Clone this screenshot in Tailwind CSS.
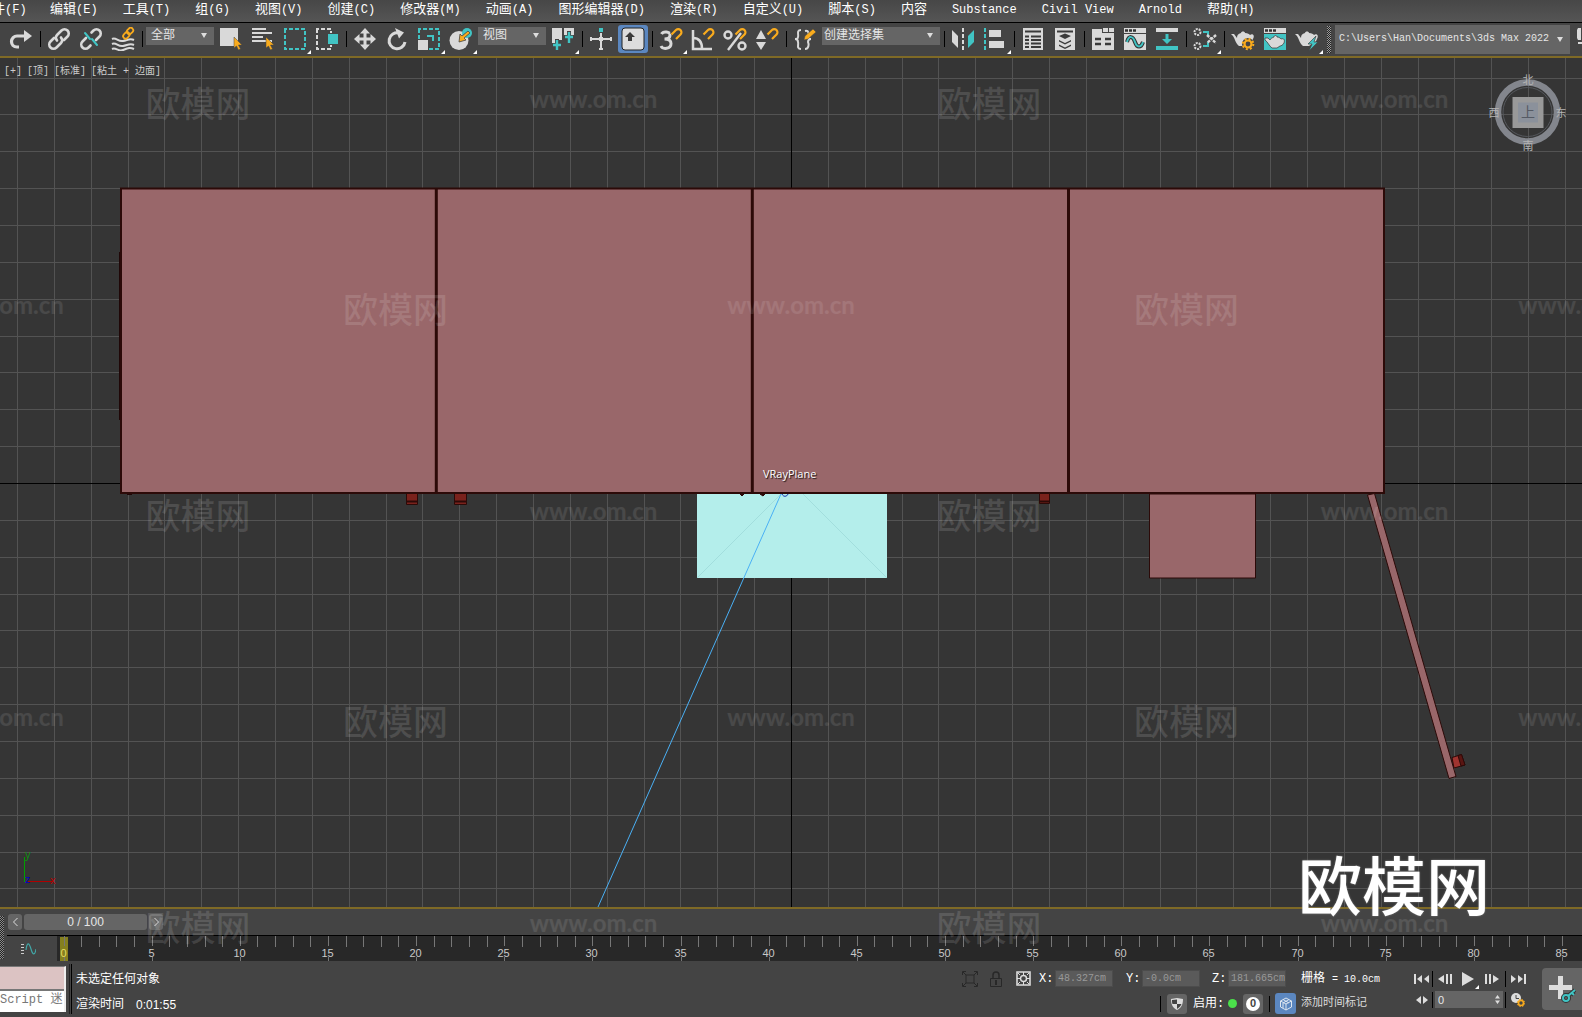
<!DOCTYPE html>
<html lang="zh-CN">
<head>
    <meta charset="UTF-8">
    <meta name="viewport" content="width=device-width, initial-scale=1.0">
    <title>3ds Max 2022</title>
    <script src="https://cdn.jsdelivr.net/npm/@tailwindcss/browser@4"></script>
</head>
<body class="relative flex h-screen flex-col overflow-hidden bg-[#444] font-['Liberation_Mono','Noto_Sans_CJK_SC',monospace] text-xs text-[#e6e6e6]">

    <!-- Menu bar -->
    <nav class="flex h-[23px] shrink-0 items-center gap-[25px] overflow-hidden border-b border-black bg-linear-to-b from-[#474747] to-[#555] pb-[2px] text-[13px] whitespace-nowrap text-white">
        <button class="-ml-[8px] w-[33px] shrink-0 text-right">件<span class="text-xs">(F)</span></button>
        <button>编辑<span class="text-xs">(E)</span></button>
        <button>工具<span class="text-xs">(T)</span></button>
        <button>组<span class="text-xs">(G)</span></button>
        <button>视图<span class="text-xs">(V)</span></button>
        <button>创建<span class="text-xs">(C)</span></button>
        <button>修改器<span class="text-xs">(M)</span></button>
        <button>动画<span class="text-xs">(A)</span></button>
        <button>图形编辑器<span class="text-xs">(D)</span></button>
        <button>渲染<span class="text-xs">(R)</span></button>
        <button>自定义<span class="text-xs">(U)</span></button>
        <button>脚本<span class="text-xs">(S)</span></button>
        <button>内容</button>
        <button class="text-xs">Substance</button>
        <button class="text-xs">Civil View</button>
        <button class="text-xs">Arnold</button>
        <button>帮助<span class="text-xs">(H)</span></button>
    </nav>

    <!-- Main toolbar -->
    <div class="flex h-[33px] shrink-0 items-center overflow-hidden bg-[#444] pb-px pl-[5px]">
        <button aria-label="重做" class="flex w-8 shrink-0 justify-center"><svg class="size-6" viewBox="0 0 24 24"><path d="M10 20H8C4.500 20 2.500 17.500 2.500 14.500S5 9 8 9h9" fill="none" stroke="#d9d9d9" stroke-width="3.200"/><path d="M15 3l8 6-8 6z" fill="#d9d9d9"/></svg></button>
        <span class="flex w-[6px] shrink-0 justify-center"><i class="h-4 w-px bg-black"></i></span>
        <button aria-label="链接" class="flex w-8 shrink-0 justify-center"><svg class="size-6" viewBox="0 0 24 24" fill="none" stroke="#d9d9d9" stroke-width="2.600" stroke-linecap="round"><path d="M10 13.500a4 4 0 0 1 0-5.500l4.500-4.500a4 4 0 0 1 6 6L17 13M14 10.500a4 4 0 0 1 0 5.500l-4.500 4.500a4 4 0 0 1-6-6L7 11"/></svg></button>
        <button aria-label="取消链接" class="flex w-8 shrink-0 justify-center"><svg class="size-6" viewBox="0 0 24 24" fill="none" stroke="#d9d9d9" stroke-width="2.600" stroke-linecap="round"><path d="M12.500 5.500l2-2a4 4 0 0 1 6 6L17 13M11.500 18.500l-2 2a4 4 0 0 1-6-6L7 11"/><path d="M6 6l5 6M13 12l5 6" stroke="#41c4c4" stroke-width="2"/></svg></button>
        <button aria-label="绑定到空间扭曲" class="flex w-8 shrink-0 justify-center"><svg class="size-6" viewBox="0 0 24 24" fill="none" stroke="#d9d9d9" stroke-width="2"><path d="M1 12c4-2 6 3 11 2s7-3 11-1M1 17c4-2 6 3 11 2s7-3 11-1M1 22c4-2 6 3 11 1s7-3 11-1"/><g stroke="#f9ab1d" stroke-width="1.800"><rect x="15.500" y="1.500" width="7" height="5" rx="2.500" transform="rotate(-45 19 4)"/><rect x="11.500" y="6" width="7" height="5" rx="2.500" transform="rotate(-45 15 8)"/></g></svg></button>
        <span class="flex w-[6px] shrink-0 justify-center"><i class="h-4 w-px bg-black"></i></span>
        <span class="relative mx-px mb-[6px] shrink-0">
            <select aria-label="选择过滤器" class="block h-[18px] w-[68px] appearance-none bg-[#656565] pl-[5px] text-xs leading-[18px]"><option>全部</option></select>
            <svg class="pointer-events-none absolute top-[6px] right-[7px] h-[5px] w-[6px]" viewBox="0 0 6 5"><path d="M0 0h6L3 5z" fill="#ddd"/></svg>
        </span>
        <button aria-label="选择对象" class="flex w-8 shrink-0 justify-center"><svg class="size-6" viewBox="0 0 24 24"><path d="M1 1h18v18H1z" fill="#d9d9d9"/><path d="M15 10v11l2.500-2 2 4 2-1-2-4h3.500z" fill="#f9ab1d" stroke="#444" stroke-width=".5"/></svg></button>
        <button aria-label="按名称选择" class="flex w-8 shrink-0 justify-center"><svg class="size-6" viewBox="0 0 24 24"><path d="M1 1h14v2H1zM1 5h20v2H1zM1 9h11v2H1zM1 13h20v2H1z" fill="#d9d9d9"/><path d="M15 10v11l2.500-2 2 4 2-1-2-4h3.500z" fill="#f9ab1d" stroke="#444" stroke-width=".5"/></svg></button>
        <button aria-label="矩形选择区域" class="relative flex w-8 shrink-0 justify-center"><svg class="size-6" viewBox="0 0 24 24"><path d="M2 2h20v20H2z" fill="none" stroke="#41c4c4" stroke-width="2" stroke-dasharray="4 2" stroke-dashoffset="2"/></svg><svg class="absolute right-0 -bottom-[3px] size-1" viewBox="0 0 4 4"><path d="M4 0v4H0z" fill="#fff"/></svg></button>
        <button aria-label="窗口/交叉" class="flex w-8 shrink-0 justify-center"><svg class="size-6" viewBox="0 0 24 24"><path d="M2 2h14v20H2z" fill="none" stroke="#d9d9d9" stroke-width="2" stroke-dasharray="4 2" stroke-dashoffset="2"/><path d="M12 6h12v12H12z" fill="#444"/><path d="M13 7h10v10H13z" fill="#41c4c4"/></svg></button>
        <span class="flex w-[6px] shrink-0 justify-center"><i class="h-4 w-px bg-black"></i></span>
        <button aria-label="移动" class="flex w-8 shrink-0 justify-center"><svg class="size-6" viewBox="0 0 24 24"><path d="M12 1l5 5.500h-3.500v4h4V7l5.500 5-5.500 5v-3.500h-4v4H17L12 23l-5-5.500h3.500v-4h-4V17L1 12l5.500-5v3.500h4v-4H7z" fill="#d9d9d9"/></svg></button>
        <button aria-label="旋转" class="flex w-8 shrink-0 justify-center"><svg class="size-6" viewBox="0 0 24 24"><path d="M14 6a8 8 0 1 0 6 9" fill="none" stroke="#d9d9d9" stroke-width="3"/><path d="M10 1l9 4.500-5 6z" fill="#d9d9d9"/></svg></button>
        <button aria-label="缩放" class="relative flex w-8 shrink-0 justify-center"><svg class="size-6" viewBox="0 0 24 24"><path d="M2 2h20v20H2z" fill="none" stroke="#41c4c4" stroke-width="2" stroke-dasharray="4 2" stroke-dashoffset="2"/><path d="M0 12h12v12H0z" fill="#444"/><path d="M1 13h10v10H1z" fill="#d9d9d9"/><path d="M10 9h6v5" fill="none" stroke="#41c4c4" stroke-width="2"/></svg><svg class="absolute right-0 -bottom-[3px] size-1" viewBox="0 0 4 4"><path d="M4 0v4H0z" fill="#fff"/></svg></button>
        <button aria-label="放置" class="relative flex w-8 shrink-0 justify-center"><svg class="size-6" viewBox="0 0 24 24"><circle cx="10" cy="13.500" r="9.500" fill="#d9d9d9"/><circle cx="18" cy="6" r="5" fill="#41c4c4"/><path d="M19 4l-6 5-2-2-1 8 7-2-2-2 6-5z" fill="#f9ab1d" stroke="#444" stroke-width=".8"/></svg><svg class="absolute right-0 -bottom-[3px] size-1" viewBox="0 0 4 4"><path d="M4 0v4H0z" fill="#fff"/></svg></button>
        <span class="relative mx-px mb-[6px] shrink-0">
            <select aria-label="参考坐标系" class="block h-[18px] w-[68px] appearance-none bg-[#656565] pl-[5px] text-xs leading-[18px]"><option>视图</option></select>
            <svg class="pointer-events-none absolute top-[6px] right-[7px] h-[5px] w-[6px]" viewBox="0 0 6 5"><path d="M0 0h6L3 5z" fill="#ddd"/></svg>
        </span>
        <button aria-label="使用轴点中心" class="relative flex w-8 shrink-0 justify-center"><svg class="size-6" viewBox="0 0 24 24"><path d="M1 1h10v12H6v6H1zM13 1h10v10H13z" fill="#d9d9d9"/><path d="M6 12v11M1 18h10M18 4v12M13 10h10" stroke="#444" stroke-width="4"/><path d="M6 13v10M2 18h8M18 5v11M14 10h8" stroke="#41c4c4" stroke-width="2.400"/></svg><svg class="absolute right-0 -bottom-[3px] size-1" viewBox="0 0 4 4"><path d="M4 0v4H0z" fill="#fff"/></svg></button>
        <span class="flex w-[6px] shrink-0 justify-center"><i class="h-4 w-px bg-black"></i></span>
        <button aria-label="选择并操纵" class="flex w-8 shrink-0 justify-center"><svg class="size-6" viewBox="0 0 24 24"><path d="M12 6v17M2 12h20" stroke="#d9d9d9" stroke-width="2"/><path d="M10 1h4v4h-4z" fill="#41c4c4"/><path d="M1 10h2v4H1zM21 10h2v4h-2zM10 21h4v2h-4zM10 10h4v4h-4z" fill="#d9d9d9"/></svg></button>
        <button aria-label="键盘快捷键覆盖切换" aria-pressed="true" class="mx-px flex h-7 w-[30px] shrink-0 items-center justify-center rounded-[3px] bg-[#5b87c0]"><svg class="size-6" viewBox="0 0 24 24"><rect x="1" y="1" width="22" height="22" rx="3" fill="#dcdcdc" stroke="#222"/><path d="M9 5l5 5h-3v4H7v-4H4z" fill="#3a3a3a"/></svg></button>
        <span class="flex w-[6px] shrink-0 justify-center"><i class="h-4 w-px bg-black"></i></span>
        <button aria-label="捕捉开关" class="relative flex w-8 shrink-0 justify-center"><svg class="size-6" viewBox="0 0 24 24" fill="none"><path d="M2.500 7c1.500-3 9-3 8.500 1.500-.3 3-3 3.500-5.500 3.500 3.500 0 6.500 1 6.500 4.500 0 6-8.500 6-10 2.500" stroke="#d9d9d9" stroke-width="3"/><path d="M12.500 7.500l4.500-4.500a3 3 0 0 1 4.500 4.500L17 12" stroke="#444" stroke-width="4.500"/><path d="M12.500 7.500l4.500-4.500a3 3 0 0 1 4.500 4.500L17 12" stroke="#f9ab1d" stroke-width="2.200"/></svg><svg class="absolute right-0 -bottom-[3px] size-1" viewBox="0 0 4 4"><path d="M4 0v4H0z" fill="#fff"/></svg></button>
        <button aria-label="角度捕捉" class="flex w-8 shrink-0 justify-center"><svg class="size-6" viewBox="0 0 24 24" fill="none"><path d="M2 3v19h19" stroke="#d9d9d9" stroke-width="2.500"/><path d="M2 11c6 0 9 4 9 11" stroke="#d9d9d9" stroke-width="2.500"/><path d="M12.500 7.500l4.500-4.500a3 3 0 0 1 4.500 4.500L17 12" stroke="#f9ab1d" stroke-width="2.200"/></svg></button>
        <button aria-label="百分比捕捉" class="flex w-8 shrink-0 justify-center"><svg class="size-6" viewBox="0 0 24 24" fill="none"><circle cx="5" cy="8" r="3.500" stroke="#d9d9d9" stroke-width="2.400"/><circle cx="19" cy="19" r="3.500" stroke="#d9d9d9" stroke-width="2.400"/><path d="M18 6L5 23" stroke="#d9d9d9" stroke-width="2.400"/><path d="M12.500 7.500l4.500-4.500a3 3 0 0 1 4.500 4.500L17 12" stroke="#f9ab1d" stroke-width="2.200"/></svg></button>
        <button aria-label="微调器捕捉" class="flex w-8 shrink-0 justify-center"><svg class="size-6" viewBox="0 0 24 24"><path d="M1 12l5-9 5 9zM1 15h10l-5 8z" fill="#d9d9d9"/><path d="M12.500 7.500l4.500-4.500a3 3 0 0 1 4.500 4.500L17 12" fill="none" stroke="#f9ab1d" stroke-width="2.200"/></svg></button>
        <span class="flex w-[6px] shrink-0 justify-center"><i class="h-4 w-px bg-black"></i></span>
        <button aria-label="管理选择集" class="flex w-8 shrink-0 justify-center"><svg class="size-6" viewBox="0 0 24 24"><path d="M8 3C3 3 6 8 5 10c0 2-1 2-3 2 2 0 3 1 3 3 1 2-2 7 3 7M12 4c4-1 4 3 3 6 0 1 1 2 3 2-2 0-3 1-3 3 1 2 1 7-3 7" fill="none" stroke="#d9d9d9" stroke-width="2"/><path d="M11 13l1-4 8-7 3 3-8 7z" fill="#f9ab1d" stroke="#444" stroke-width=".5"/></svg></button>
        <span class="relative mx-px mb-[6px] shrink-0">
            <select aria-label="命名选择集" class="block h-[18px] w-[118px] appearance-none bg-[#656565] pl-[2px] text-xs leading-[18px]"><option>创建选择集</option></select>
            <svg class="pointer-events-none absolute top-[6px] right-[7px] h-[5px] w-[6px]" viewBox="0 0 6 5"><path d="M0 0h6L3 5z" fill="#ddd"/></svg>
        </span>
        <span class="flex w-[6px] shrink-0 justify-center"><i class="h-4 w-px bg-black"></i></span>
        <button aria-label="镜像" class="flex w-8 shrink-0 justify-center"><svg class="size-6" viewBox="0 0 24 24"><path d="M1 3l6 6v12l-6-6z" fill="#d9d9d9"/><path d="M23 3l-6 6v12l6-6z" fill="#41c4c4"/><path d="M12 1v22" stroke="#d9d9d9" stroke-width="2" stroke-dasharray="4 2"/></svg></button>
        <button aria-label="对齐" class="relative flex w-8 shrink-0 justify-center"><svg class="size-6" viewBox="0 0 24 24"><path d="M2 1v22" stroke="#41c4c4" stroke-width="2" stroke-dasharray="4 2"/><path d="M6 3h12v7H6zM6 14h15v7H6z" fill="#d9d9d9"/></svg><svg class="absolute right-0 -bottom-[3px] size-1" viewBox="0 0 4 4"><path d="M4 0v4H0z" fill="#fff"/></svg></button>
        <span class="flex w-[6px] shrink-0 justify-center"><i class="h-4 w-px bg-black"></i></span>
        <button aria-label="场景资源管理器" class="flex w-8 shrink-0 justify-center"><svg class="size-6" viewBox="0 0 24 24"><path d="M2 1h20v22H2z" fill="#d9d9d9"/><path d="M4 4.500h16M4 9.500h4M10 9.500h10M4 13h4M10 13h10M4 16.500h4M10 16.500h10M4 20h4M10 20h10" stroke="#3a3a3a" stroke-width="2"/></svg></button>
        <button aria-label="层资源管理器" class="flex w-8 shrink-0 justify-center"><svg class="size-6" viewBox="0 0 24 24"><path d="M2 1h20v22H2z" fill="#d9d9d9"/><path d="M4 4.500h16" stroke="#3a3a3a" stroke-width="2"/><path d="M12 6.500l6 2.500-6 3-6-3zM6 13l6 3 6-3v1.500l-6 3-6-3zM6 17.500l6 3 6-3V19l-6 3-6-3z" fill="#3a3a3a"/></svg></button>
        <span class="flex w-[6px] shrink-0 justify-center"><i class="h-4 w-px bg-black"></i></span>
        <button aria-label="功能区" class="flex w-8 shrink-0 justify-center"><svg class="size-6" viewBox="0 0 24 24"><path d="M1 2h10v4h12v17H1zM12 1h5v4h-5zM18 1h5v4h-5z" fill="#d9d9d9"/><path d="M4 12h6M14 12h6M4 17h6M14 17h6" stroke="#3a3a3a" stroke-width="2.500"/></svg></button>
        <button aria-label="曲线编辑器" class="flex w-8 shrink-0 justify-center"><svg class="size-6" viewBox="0 0 24 24"><path d="M1 1h22v22H1z" fill="#d9d9d9"/><path d="M2 3.500h11" stroke="#333" stroke-width="2.500" stroke-dasharray="3 1"/><path d="M1 6.500h22" stroke="#444"/><path d="M4 15c2-7 6-6 8 0s6 6 8 0" fill="none" stroke="#333" stroke-width="4"/><path d="M4 15c2-7 6-6 8 0s6 6 8 0" fill="none" stroke="#41c4c4" stroke-width="2"/></svg></button>
        <button aria-label="图解视图" class="flex w-8 shrink-0 justify-center"><svg class="size-6" viewBox="0 0 24 24"><path d="M1 1h22v4H1z" fill="#d9d9d9"/><path d="M1 19h22v4H1zM10.500 7h3v5H17l-5 5-5-5h3.500z" fill="#41c4c4"/></svg></button>
        <span class="flex w-[6px] shrink-0 justify-center"><i class="h-4 w-px bg-black"></i></span>
        <button aria-label="材质编辑器" class="relative flex w-8 shrink-0 justify-center"><svg class="size-6" viewBox="0 0 24 24" fill="none"><circle cx="4.500" cy="5" r="3" stroke="#d9d9d9" stroke-width="2" stroke-dasharray="2 1"/><circle cx="4.500" cy="19" r="3" stroke="#d9d9d9" stroke-width="2" stroke-dasharray="2 1"/><path d="M10 5h5v4M10 19h5v-4" stroke="#41c4c4" stroke-width="2"/><path d="M14 8l9 8M23 8l-9 8" stroke="#d9d9d9" stroke-width="2.400" stroke-dasharray="3 1"/></svg><svg class="absolute right-0 -bottom-[3px] size-1" viewBox="0 0 4 4"><path d="M4 0v4H0z" fill="#fff"/></svg></button>
        <span class="flex w-[6px] shrink-0 justify-center"><i class="h-4 w-px bg-black"></i></span>
        <button aria-label="渲染设置" class="flex w-8 shrink-0 justify-center"><svg class="size-6" viewBox="0 0 24 24"><path d="M0 7h3l3 4c0-3 1-4 4-5 0-2 4-2 4 0 3 0 4 1 5 2 3-2 5 1 3 4-1 3-3 4-5 5l-3 2H8C5 17 4 12 2 9z" fill="#d9d9d9"/><circle cx="17" cy="17" r="6" fill="#444"/><circle cx="17" cy="17" r="3.500" fill="none" stroke="#f9ab1d" stroke-width="2.200"/><circle cx="17" cy="17" r="5.300" fill="none" stroke="#f9ab1d" stroke-width="2" stroke-dasharray="2 2.160"/></svg></button>
        <button aria-label="渲染帧窗口" class="flex w-8 shrink-0 justify-center"><svg class="size-6" viewBox="0 0 24 24"><path d="M1 1h22v5H1z" fill="#d9d9d9"/><path d="M2 3.500h11" stroke="#333" stroke-width="2.500" stroke-dasharray="3 1"/><path d="M1 7h22v16H1z" fill="#41c4c4"/><path d="M2 11h3l2 2c1-2 2-2 4-3 0-2 3-2 3 0 2 0 3 1 4 2 3-1 4 1 3 4-1 2-3 3-4 3l-3 2H9c-3-2-4-6-7-8z" fill="#d9d9d9" stroke="#333" stroke-width=".7"/></svg></button>
        <button aria-label="渲染产品" class="relative flex w-8 shrink-0 justify-center"><svg class="size-6" viewBox="0 0 24 24"><path d="M0 7h3l3 4c0-3 1-4 4-5 0-2 4-2 4 0 3 0 4 1 5 2 3-2 5 1 3 4-1 3-3 4-5 5l-3 2H8C5 17 4 12 2 9z" fill="#d9d9d9"/><path d="M21 9l-8 8h4l-3 7 9-9h-4z" fill="#41c4c4" stroke="#444" stroke-width=".7"/></svg><svg class="absolute right-0 -bottom-[3px] size-1" viewBox="0 0 4 4"><path d="M4 0v4H0z" fill="#fff"/></svg></button>
        <i class="mx-1 h-[27px] w-1 shrink-0 bg-[repeating-conic-gradient(#222_0_25%,#999_0_50%)] bg-[length:2px_2px]"></i>
        <span class="relative grow">
            <select aria-label="项目文件夹" class="block h-[29px] w-full appearance-none bg-[#656565] pl-[4px] text-[10px]"><option>C:\Users\Han\Documents\3ds Max 2022</option></select>
            <svg class="pointer-events-none absolute top-3 right-[7px] h-[5px] w-[6px]" viewBox="0 0 6 5"><path d="M0 0h6L3 5z" fill="#ddd"/></svg>
        </span>
        <button aria-label="更多" class="ml-[7px] flex w-[5px] shrink-0 overflow-hidden"><svg class="mb-1 h-[18px] w-[5px]" viewBox="0 0 5 18"><path d="M0 2l1-2h3v12H1l-1-2zM1 14h4v2H1z" fill="#d9d9d9"/></svg></button>
    </div>

    <!-- Viewport -->
    <main class="relative min-h-0 grow overflow-hidden border-y-2 border-[#7f6a26] bg-[#353535]">
        <svg class="absolute inset-0 size-full" viewBox="0 58 1582 849" preserveAspectRatio="xMidYMid slice">
            <g id="grid" shape-rendering="crispEdges"></g>
            <path d="M791.500 58v849M0 483.500h1582" stroke="#000"/>

            <!-- Handles on the front edge -->
            <g fill="#7a221c" stroke="#2c0a08">
                <path d="M406.500 493.500h11v11h-11zM454.500 493.500h12v11h-12zM1039.500 493.500h10v10h-10z"/>
                <path d="M406 501.500h12M454 501.500h13M1039 501.500h11" stroke-width="2"/>
            </g>

            <!-- Cabinets -->
            <path d="M119 252h2v168h-2zM127 494h5v1h-5z" fill="#1f0707"/>
            <path d="M121 188.500h1263V493H121z" fill="#99676a" stroke="#2c0a08" stroke-width="2"/>
            <path d="M436.300 188v305M752.300 188v305M1068.500 188v305" stroke="#2c0a08" stroke-width="3"/>
            <path d="M1149.500 494v84h106v-84z" fill="#99676a" stroke="#2c0a08"/>
            <path d="M1367.500 495l7-1.500 81.500 283-7 2z" fill="#99676a" stroke="#2c0a08"/>
            <path d="M1452 757.500l9.500-3 3.500 10.500-11 3z" fill="#a03430" stroke="#2c0a08"/>
            <path d="M1458 755.500l3.500-1 3.500 10.500-4 1z" fill="#5a1512" stroke="#2c0a08"/>

            <!-- VRay plane light -->
            <path d="M697 494h190v84H697z" fill="#b4eeeb"/>
            <path d="M697 578l84-84M803 494l84 84" stroke="#a2dedd"/>
            <path d="M740 494h4l-2 2zM760 494h5l-2 2z" fill="#2c0a08" stroke="#2c0a08"/>
            <path d="M782 494c1 3 5 3 6 0" fill="none" stroke="#1030b0"/>
            <path d="M781 494L598 907" stroke="#4ab0f5"/>
            <text x="763" y="478" fill="#fff" class="font-['Open_Sans',sans-serif] text-[11px] [text-shadow:1px_1px_1px_#111]">VRayPlane</text>

            <!-- Axis tripod -->
            <path d="M24.500 857v25" stroke="#00a000"/>
            <path d="M28 881.500h24" stroke="#b00000"/>
            <g class="font-['Open_Sans',sans-serif] text-[11px]">
                <text x="25" y="858" fill="#109010">y</text>
                <text x="25" y="883" fill="#0000c8">z</text>
                <text x="50" y="884" fill="#c00000">x</text>
            </g>
        </svg>

        <div class="absolute top-[6px] left-1 flex gap-[5px] text-[10px] leading-4 text-[#ccc]">
            <button>[+]</button><button>[顶]</button><button>[标准]</button><button>[粘土 + 边面]</button>
        </div>

        <!-- View cube -->
        <svg class="absolute top-[14px] right-[14px] size-20 text-[11px]" viewBox="0 0 80 80">
            <circle cx="39.500" cy="40" r="29.500" fill="none" stroke="#83868d" stroke-width="6.500"/>
            <circle cx="39.500" cy="40" r="24.500" fill="none" stroke="#55585d"/>
            <path d="M24.500 25h31v31h-31z" fill="#999"/>
            <path d="M30 30.500h20v20H30z" fill="#8b919b"/>
            <g text-anchor="middle">
                <text x="40" y="45" fill="#555a64" class="text-[14px]">上</text>
                <g fill="#b4b4b4"><text x="40" y="12">北</text><text x="40" y="78">南</text><text x="6" y="45">西</text><text x="73" y="45">东</text></g>
            </g>
        </svg>
    </main>

    <!-- Time slider and track bar -->
    <div class="flex h-[52px] shrink-0">
        <i class="mt-[7px] mr-[3px] h-[43px] w-1 shrink-0 bg-[repeating-conic-gradient(#222_0_25%,#888_0_50%)] bg-[length:2px_2px]"></i>
        <div class="flex min-w-0 grow flex-col">
            <div class="flex h-[26px] items-start gap-[2px] pt-[5px] pl-px">
                <button aria-label="上一帧" class="flex h-4 w-[14px] items-center justify-center rounded-[3px] bg-[#656565]"><svg class="h-2 w-[5px]" viewBox="0 0 5 8"><path d="M4.500 0l-4 4 4 4" fill="none" stroke="#ddd"/></svg></button>
                <button class="h-4 w-[123px] rounded-[3px] bg-[#656565] font-['Liberation_Sans',sans-serif] text-xs leading-4">0 / 100</button>
                <button aria-label="下一帧" class="flex h-4 w-[14px] items-center justify-center rounded-[3px] bg-[#656565]"><svg class="h-2 w-[5px]" viewBox="0 0 5 8"><path d="M.5 0l4 4-4 4" fill="none" stroke="#ddd"/></svg></button>
            </div>
            <div class="flex h-[26px] border-t border-black">
                <button aria-label="打开迷你曲线编辑器" class="flex w-[50px] shrink-0 items-center justify-center pr-2"><svg class="h-3 w-[15px]" viewBox="0 0 15 12"><path d="M0 1.500h3M0 4.500h3M0 7.500h3M0 10.500h3" stroke="#ccc"/><path d="M5 7C6-1 8-1 10 6s4 6 5 0" fill="none" stroke="#41a8a8" stroke-width="1.200"/></svg></button>
                <div class="min-w-0 grow overflow-hidden bg-[#282828]">
                    <svg id="track" class="block h-[25px] w-full font-['Liberation_Sans',sans-serif] text-[11px]"></svg>
                </div>
            </div>
        </div>
    </div>

    <!-- Status bar -->
    <footer class="flex h-[56px] shrink-0 items-start overflow-hidden whitespace-nowrap">
        <div class="mt-[5px] w-[66px] shrink-0 overflow-hidden border-t border-r-2 border-[#eee] border-t-[#777]">
            <div class="h-[22px] bg-[#dcc3c3]"></div>
            <input aria-label="MAXScript 迷你侦听器" value="Script 迷·" class="block h-[23px] w-full border-t-2 border-[#777] bg-white pb-2 pl-0 text-xs text-[#777]">
        </div>
        <i class="mt-[3px] ml-[3px] h-[50px] w-[3px] shrink-0 border-x border-black border-l-[#222]"></i>
        <div class="mt-[10px] ml-1 flex flex-col gap-[7px] text-white">
            <p class="leading-[18px]">未选定任何对象</p>
            <p class="flex gap-3 leading-[18px]">渲染时间 <span class="font-['Liberation_Sans',sans-serif]">0:01:55</span></p>
        </div>

        <div class="mt-[7px] ml-auto flex flex-col gap-[4px]">
            <div class="flex h-[21px] items-center justify-end">
                <button aria-label="孤立当前选择" class="mr-3"><svg class="size-4" viewBox="0 0 16 16" fill="none" stroke="#282828"><path d="M.5 4V.5H4M12 .5h3.500V4M.5 12v3.500H4M12 15.500h3.500V12M4 4h8v8H4zM1 1l3 3M15 1l-3 3M1 15l3-3M15 15l-3-3"/></svg></button>
                <button aria-label="选择锁定" class="mr-[14px]"><svg class="h-4 w-3" viewBox="0 0 12 16"><path d="M3 7V4c0-4 6-4 6 0v3" fill="none" stroke="#282828" stroke-width="1.500"/><path d="M.5 7.500h11v8H.5z" fill="none" stroke="#282828"/><path d="M5 9h2v5H5z" fill="#282828"/></svg></button>
                <button aria-label="绝对/偏移模式" class="mr-2"><svg class="size-[15px]" viewBox="0 0 15 15" fill="none" stroke="#ddd"><path d="M1 1h13v13H1z" stroke-width="1.600"/><circle cx="7.500" cy="7.500" r="3" stroke-width="1.500"/><path d="M7.500 1v4M7.500 10v4M1 7.500h4M10 7.500h4M2 2l2 2M13 2l-2 2M2 13l2-2M13 13l-2-2"/></svg></button>
                <label for="x" class="w-4 text-white">X:</label>
                <input id="x" value="48.327cm" class="mr-[13px] h-[17px] w-[58px] border border-[#4c4c4c] bg-[#5a5a5a] pl-[2px] text-[10px] text-[#999]">
                <label for="y" class="w-4 text-white">Y:</label>
                <input id="y" value="-0.0cm" class="mr-[12px] h-[17px] w-[58px] border border-[#4c4c4c] bg-[#5a5a5a] pl-[2px] text-[10px] text-[#999]">
                <label for="z" class="w-4 text-white">Z:</label>
                <input id="z" value="181.665cm" class="mr-[15px] h-[17px] w-[58px] border border-[#4c4c4c] bg-[#5a5a5a] pl-[2px] text-[10px] text-[#999]">
                <span class="w-[110px] text-white">栅格<span class="ml-[7px] text-[10px]">= 10.0cm</span></span>
            </div>
            <div class="flex h-[21px] items-center justify-end">
                <i class="mr-[6px] h-4 w-px bg-black"></i>
                <button aria-label="安全脚本" class="mr-[6px] flex size-5 items-center justify-center rounded-[3px] bg-[#656565]"><svg class="size-3" viewBox="0 0 12 12"><path d="M0 1l6-1 6 1c0 6-2 9-6 11C2 10 0 7 0 1z" fill="#ddd"/><path d="M6 1.500V6H1.500C1 5 1 3 1 2zM6 6h4.500c-1 2-2 3.500-4.500 5z" fill="#444"/></svg></button>
                <span class="w-[35px] text-white">启用:</span>
                <i class="mr-[6px] size-[9px] rounded-full bg-[#4be04b]"></i>
                <button class="mr-[6px] flex size-5 items-center justify-center rounded-[3px] bg-[#656565]"><span class="flex size-[14px] items-center justify-center rounded-full bg-white font-['Liberation_Sans',sans-serif] text-[11px] font-bold text-[#444]">0</span></button>
                <i class="mr-[5px] h-4 w-px bg-black"></i>
                <button aria-label="自适应降级" class="mr-[5px] flex size-[21px] items-center justify-center rounded-[3px] bg-[#5b87c0]"><svg class="size-[14px]" viewBox="0 0 14 14" fill="none" stroke="#dde6f0"><path d="M7 1l5.500 3v6L7 13l-5.500-3V4zM1.500 4L7 7l5.500-3M7 7v6M4 2.500L10 6M10 2.500L4 6v5"/></svg></button>
                <button class="w-[110px] text-left text-[11px] text-[#ddd]">添加时间标记</button>
            </div>
        </div>

        <!-- Playback controls -->
        <div class="mt-[7px] flex shrink-0 flex-col gap-[4px]">
            <div class="flex h-[21px] items-center">
                <button aria-label="转至开头" class="flex w-[21px] justify-center"><svg class="h-[10px] w-[15px]" viewBox="0 0 15 10"><path d="M0 0h2v10H0zM8 1v8L3 5zM15 1v8l-5-4z" fill="#ddd"/></svg></button>
                <i class="h-4 w-px bg-black"></i>
                <button aria-label="上一帧" class="flex w-6 justify-center"><svg class="h-[10px] w-[14px]" viewBox="0 0 14 10"><path d="M6 1v8L0 5zM8 0h2v10H8zM12 0h2v10h-2z" fill="#ddd"/></svg></button>
                <button aria-label="播放" class="relative flex w-[22px] justify-center"><svg class="h-[14px] w-3" viewBox="0 0 12 14"><path d="M0 0l12 7-12 7z" fill="#ddd"/></svg><svg class="absolute right-0 -bottom-[3px] size-1" viewBox="0 0 4 4"><path d="M4 0v4H0z" fill="#fff"/></svg></button>
                <button aria-label="下一帧" class="flex w-[26px] justify-center"><svg class="h-[10px] w-[14px]" viewBox="0 0 14 10"><path d="M0 0h2v10H0zM4 0h2v10H4zM8 1v8l6-4z" fill="#ddd"/></svg></button>
                <i class="h-4 w-px bg-black"></i>
                <button aria-label="转至结尾" class="flex w-6 justify-center"><svg class="h-[10px] w-[15px]" viewBox="0 0 15 10"><path d="M13 0h2v10h-2zM7 1v8l5-4zM0 1v8l5-4z" fill="#ddd"/></svg></button>
            </div>
            <div class="flex h-[21px] items-center pb-[8px]">
                <button aria-label="关键点模式切换" class="flex w-[21px] justify-center"><svg class="h-2 w-3" viewBox="0 0 12 8"><path d="M5 0v8L0 4zM7 0v8l5-4z" fill="#ddd"/></svg></button>
                <i class="mr-[2px] h-4 w-px bg-black"></i>
                <span class="relative">
                    <input aria-label="当前帧" value="0" class="block h-[17px] w-[68px] bg-[#656565] pl-[3px] font-['Liberation_Sans',sans-serif] text-[11px]">
                    <svg class="pointer-events-none absolute top-[4px] right-[3px] h-[9px] w-[5px]" viewBox="0 0 5 9"><path d="M0 3.500L2.500 0 5 3.500zM0 5.500h5L2.500 9z" fill="#ddd"/></svg>
                </span>
                <i class="ml-[2px] h-4 w-px bg-black"></i>
                <button aria-label="时间配置" class="flex w-6 justify-center"><svg class="size-[14px]" viewBox="0 0 14 14" fill="none"><circle cx="5" cy="5" r="5" fill="#ddd"/><path d="M5 2v3.500h3" stroke="#444"/><circle cx="10" cy="10" r="2.500" fill="#444" stroke="#f9ab1d" stroke-width="1.600"/><circle cx="10" cy="10" r="3.700" stroke="#f9ab1d" stroke-dasharray="1.500 1.400"/></svg></button>
            </div>
        </div>
        <button aria-label="设置关键点" class="mt-[7px] ml-3 flex h-[42px] w-10 shrink-0 items-center justify-center rounded-l-[4px] bg-[#656565]"><svg class="size-7" viewBox="0 0 28 28"><path d="M10 1h5v9h9v5h-9v9h-5v-9H1v-5h9z" fill="#ddd"/><g fill="none" stroke="#333" stroke-width="4"><circle cx="18" cy="23" r="3"/><path d="M20 21l7-6M24 18l2 2"/></g><g fill="none" stroke="#41c4c4" stroke-width="2"><circle cx="18" cy="23" r="3"/><path d="M20 21l7-6M24 18l2 2"/></g></svg></button>
    </footer>

    <!-- Big logo -->
    <div class="pointer-events-none absolute right-[92px] bottom-[103px] font-['Noto_Sans_CJK_SC',sans-serif] text-[64px] leading-[64px] font-medium text-white [text-shadow:0_0_2px_#888]">欧模网</div>

    <!-- Repeated watermark -->
    <div id="marks" class="pointer-events-none absolute inset-0 overflow-hidden"></div>

    <script>
        const SVG = 'http://www.w3.org/2000/svg';

        function add(parent, tag, attrs, text) {
            const el = document.createElementNS(SVG, tag);
            for (const key in attrs) el.setAttribute(key, attrs[key]);
            if (text !== undefined) el.textContent = text;
            parent.appendChild(el);
            return el;
        }

        // Grid lines, counted from the world origin
        const grid = document.getElementById('grid');
        for (let i = -21; i <= 21; i++) {
            const x = Math.floor(791.5 + i * 36.86) + 0.5;
            const y = Math.floor(483.5 + i * 36.86) + 0.5;
            add(grid, 'path', { d: `M${x} 58v849M0 ${y}h1582`, stroke: '#535353' });
        }

        // Track bar ticks, one per frame
        const track = document.getElementById('track');
        add(track, 'rect', { x: 3, y: 1, width: 8, height: 24, fill: '#85801f' });
        const lastFrame = Math.min(100, Math.floor((track.clientWidth - 12) / 17.63));
        for (let f = 0; f <= lastFrame; f++) {
            const x = Math.floor(7 + f * 17.63) + 0.5;
            add(track, 'path', { d: f % 5 ? `M${x} 0v11` : `M${x} 0v10M${x} 21v4`, stroke: '#777' });
            if (f % 5 === 0) {
                add(track, 'text', { x: x - 1, y: 21, 'text-anchor': 'middle', fill: f ? '#c8c8c8' : '#e6dc60' }, f);
            }
        }

        // Watermark rows: logo and address alternate, every other row is shifted
        const marks = document.getElementById('marks');
        for (let row = 0; row < 5; row++) {
            for (let col = 0; col < (row % 2 ? 5 : 4); col++) {
                const logo = (row + col) % 2 === 0;
                const mark = document.createElement('span');
                mark.className = logo
                    ? "absolute -translate-1/2 font-['Noto_Sans_CJK_SC',sans-serif] text-[35px] leading-none font-medium whitespace-nowrap text-white/12"
                    : "absolute -translate-1/2 font-['Lato',sans-serif] text-[24px] leading-none font-bold whitespace-nowrap text-white/10";
                mark.textContent = logo ? '欧模网' : 'www.om.cn';
                mark.style.left = `${((row % 2 ? 0 : 198) + col * 395.5) / 15.82}%`;
                mark.style.top = `${((logo ? 101 : 99) + row * 206) / 10.17}%`;
                marks.appendChild(mark);
            }
        }
    </script>
</body>
</html>
